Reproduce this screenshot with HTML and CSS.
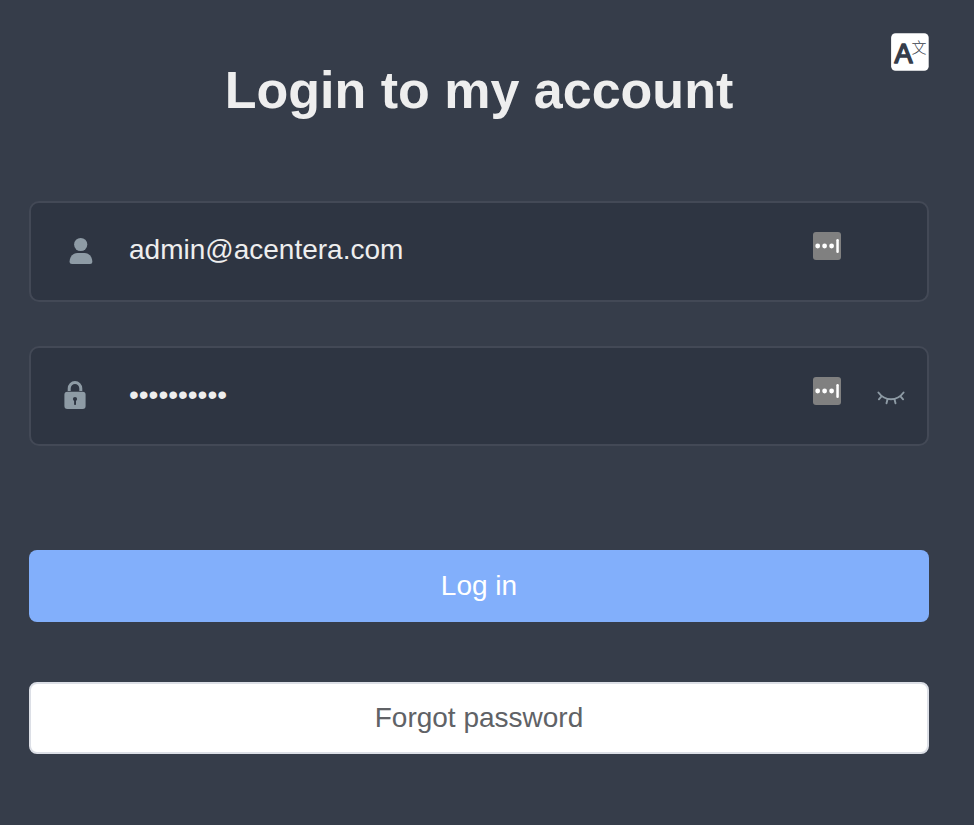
FILE: index.html
```html
<!DOCTYPE html>
<html lang="en">
<head>
<meta charset="utf-8">
<title>Login</title>
<link rel="stylesheet" href="styles.css">
</head>
<body>
<main class="login">
  <header class="header">
    <h1 class="title">Login to my account</h1>
    <button class="language" type="button" aria-label="Language">
      <svg width="38" height="38" viewBox="0 0 38 38" fill="#363d4a">
        <rect x=".1" y=".3" width="37.600" height="37.400" rx="4.500" fill="#fff"/>
        <text class="latin" x="3.500" y="30">A</text>
        <text class="han" x="20.600" y="20.200">文</text>
      </svg>
    </button>
  </header>
  <form class="form">
    <div class="field">
      <svg class="icon icon-user" width="24" height="28" viewBox="0 0 24 28" fill="#8e9ba5">
        <circle cx="11.700" cy="7.500" r="6.600"/>
        <path d="M8.500 16H15.500C20 16 23.300 20 23.300 24.500C23.300 26.300 22.500 27 21 27H3C1.500 27 .6 26.300 .6 24.500C.6 20 4 16 8.500 16Z"/>
      </svg>
      <input class="input" type="text" value="admin@acentera.com" aria-label="Email">
      <svg class="manager" width="28" height="28" viewBox="0 0 28 28" fill="#fff">
        <rect width="28" height="28" rx="3" fill="#808080"/>
        <circle cx="4.700" cy="14" r="2.400"/><circle cx="11.600" cy="14" r="2.400"/><circle cx="18.600" cy="14" r="2.400"/>
        <rect x="23.300" y="7" width="2.500" height="14" rx="1.200"/>
      </svg>
    </div>
    <div class="field field-password">
      <svg class="icon icon-lock" width="22" height="30" viewBox="0 0 22 30">
        <path d="M5.200 11V8.500A5.800 6 0 0 1 16.800 8.500V11" fill="none" stroke="#8e9ba5" stroke-width="3"/>
        <rect x=".4" y="11.700" width="21.200" height="17.300" rx="3" fill="#8e9ba5"/>
        <circle cx="11" cy="19" r="2.100" fill="#2e3542"/>
        <rect x="10.100" y="19" width="1.900" height="6" rx=".7" fill="#2e3542"/>
      </svg>
      <input class="input" type="password" value="password12" aria-label="Password">
      <svg class="manager" width="28" height="28" viewBox="0 0 28 28" fill="#fff">
        <rect width="28" height="28" rx="3" fill="#808080"/>
        <circle cx="4.700" cy="14" r="2.400"/><circle cx="11.600" cy="14" r="2.400"/><circle cx="18.600" cy="14" r="2.400"/>
        <rect x="23.300" y="7" width="2.500" height="14" rx="1.200"/>
      </svg>
      <svg class="eye" width="28" height="14" viewBox="0 0 28 14" fill="none" stroke="#8e9ba5" stroke-width="1.900" stroke-linecap="round">
        <path d="M1.400 1.500C8 10.500 20 10.500 26.600 1.500M4.500 5.300L1.900 8.300M10.500 8.300L9.500 12.300M17.500 8.300L18.500 12.300M23.500 5.300L26.100 8.300"/>
      </svg>
    </div>
    <button class="button primary" type="button">Log in</button>
    <button class="button secondary" type="button">Forgot password</button>
  </form>
</main>
</body>
</html>
```
FILE: styles.css
```css
* { box-sizing: border-box; }
body {
  margin: 0;
  min-height: 825px;
  background: #363d4a;
  color: #eee;
  font-family: "Liberation Sans", Arial, sans-serif;
}
.login { position: relative; width: 900px; margin-left: 29px; padding-top: 60px; }
.header { height: 141px; }
.title { margin: 0; font-size: 52px; line-height: 60px; font-weight: 700; text-align: center; }
.language {
  position: absolute;
  top: 33px;
  right: 0;
  padding: 0;
  border: 0;
  background: none;
}
.language svg { display: block; }
.latin {
  font: 400 27px "Liberation Sans", Arial, sans-serif;
  stroke: #363d4a;
  stroke-width: 1.6px;
  stroke-linejoin: round;
}
.han { font: 300 15px "Noto Sans CJK SC", sans-serif; }
.form { display: flex; flex-direction: column; }
.field {
  position: relative;
  display: flex;
  align-items: center;
  height: 101px;
  padding-bottom: 3px;
  border: 2px solid #434956;
  border-radius: 10px;
  background: #2e3542;
}
.field-password { height: 100px; margin-top: 44px; padding-bottom: 2px; }
.icon { position: absolute; }
.icon-user { left: 38px; top: 34px; }
.icon-lock { left: 33px; top: 32px; }
.input {
  width: 670px;
  height: 40px;
  margin-left: 98px;
  padding: 0;
  border: 0;
  outline: 0;
  background: transparent;
  color: #eee;
  font: 28px "Liberation Sans", Arial, sans-serif;
}
.manager { position: absolute; left: 782px; top: 29px; }
.eye { position: absolute; left: 846px; top: 43px; }
.button {
  height: 72px;
  padding: 0;
  border: 0;
  border-radius: 8px;
  font: 28px "Liberation Sans", Arial, sans-serif;
}
.primary { margin-top: 104px; background: #82affb; color: #fff; }
.secondary { margin-top: 60px; border: 2px solid #dcdfe6; background: #fff; color: #606266; }
```
